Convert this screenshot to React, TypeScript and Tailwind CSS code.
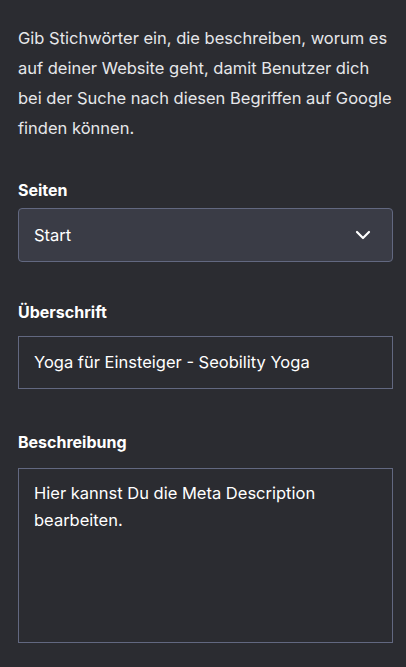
import React from "react";

export default function App() {
  return (
    <div className="min-h-[667px] w-full bg-[#2b2c31] pl-[18px] pr-[13px] pt-[23px] pb-6 text-[#eceef2]" style={{ fontFamily: "Inter, 'Noto Sans', sans-serif" }}>
      <p className="text-[16.5px] leading-[30px] text-[#e6e7ea]">
        Gib Stichwörter ein, die beschreiben, worum es auf deiner Website geht, damit Benutzer dich bei der Suche nach diesen Begriffen auf Google finden können.
      </p>

      <div className="mt-[36px] text-[16px] font-bold leading-[22px] text-white">Seiten</div>
      <div className="mt-[7px] flex h-[54px] items-center justify-between rounded-[4px] border border-[#626880] bg-[#3a3c46] pl-[15px] pr-[21px]">
        <span className="text-[16.5px] text-white">Start</span>
        <svg width="16" height="10" viewBox="0 0 16 10" fill="none">
          <path d="M2 2l6 6 6-6" stroke="white" strokeWidth="2.2" strokeLinecap="round" strokeLinejoin="round" />
        </svg>
      </div>

      <div className="mt-[39px] text-[16px] font-bold leading-[22px] text-white">Überschrift</div>
      <div className="mt-[13px] flex h-[53px] items-center border border-[#626880] pl-[15px]">
        <span className="text-[16.5px] text-white">Yoga für Einsteiger - Seobility Yoga</span>
      </div>

      <div className="mt-[42px] text-[16px] font-bold leading-[22px] text-white">Beschreibung</div>
      <div className="mt-[15px] h-[175px] border border-[#626880] px-[15px] pt-[11px]">
        <p className="text-[16.5px] leading-[27px] text-white">
          Hier kannst Du die Meta Description bearbeiten.
        </p>
      </div>
    </div>
  );
}
